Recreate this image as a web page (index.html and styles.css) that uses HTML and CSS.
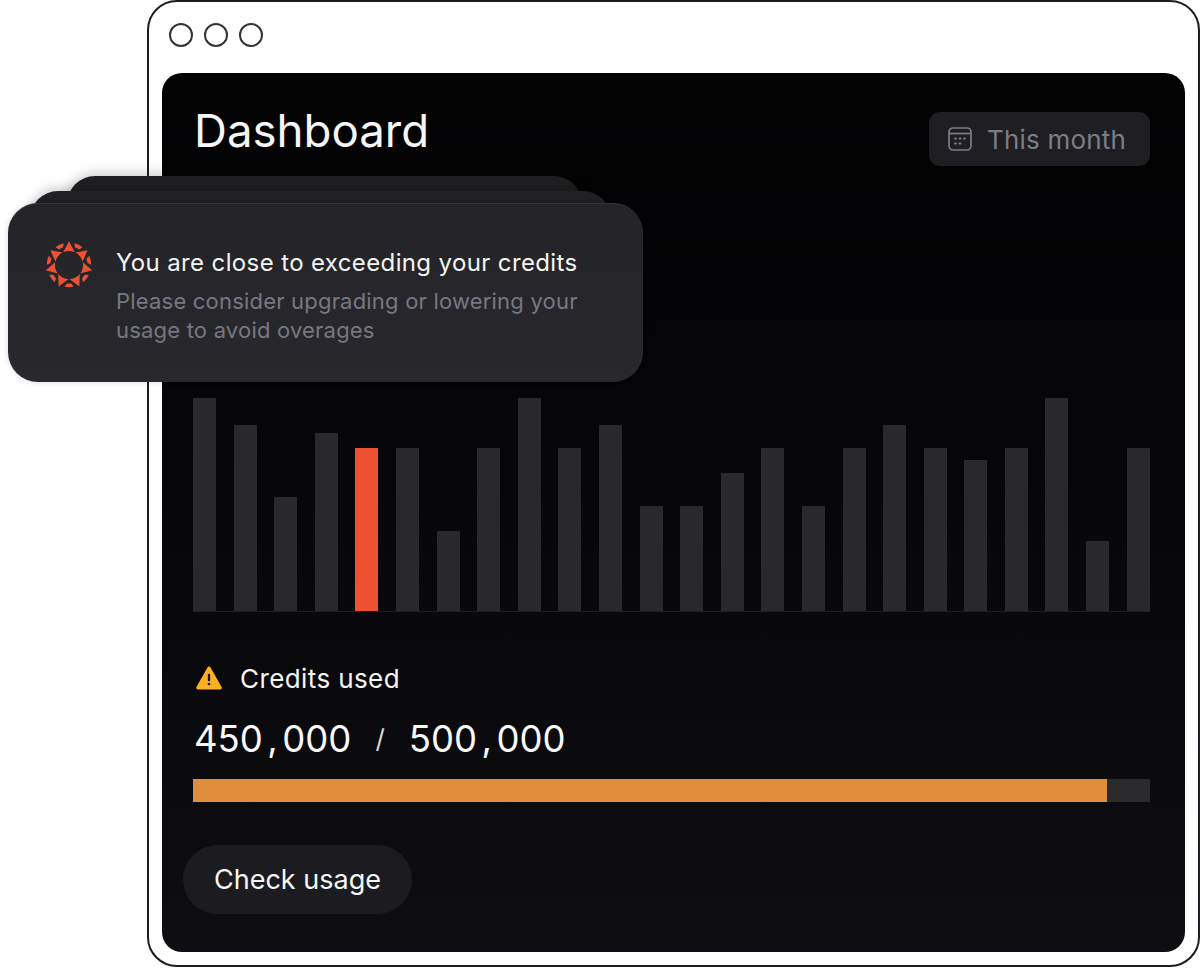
FILE: index.html
```html
<!DOCTYPE html>
<html lang="en">
<head>
<meta charset="utf-8">
<title>Dashboard</title>
<link rel="stylesheet" href="styles.css">
</head>
<body>
<div class="stage">
  <div class="window">
    <div class="dots"><span class="dot"></span><span class="dot"></span><span class="dot"></span></div>
    <main class="panel">
      <header class="head">
        <h1 class="title">Dashboard</h1>
        <div class="range">
          <svg class="cal" viewBox="0 0 24 24" fill="none" stroke="currentColor" stroke-width="1.7">
            <rect x="1" y="1" width="22" height="22" rx="4"/>
            <path d="M1 6.5h22"/>
            <path d="M7 11.5h1M11.5 11.5h1M16 11.5h1M7 16.5h1M11.5 16.5h1" stroke-linecap="round" stroke-width="1.8"/>
          </svg>
          <span>This month</span>
        </div>
      </header>
      <div class="chart">
        <div class="bar" style="height:213px"></div>
        <div class="bar" style="height:186px"></div>
        <div class="bar" style="height:114px"></div>
        <div class="bar" style="height:178px"></div>
        <div class="bar hot" style="height:163px"></div>
        <div class="bar" style="height:163px"></div>
        <div class="bar" style="height:80px"></div>
        <div class="bar" style="height:163px"></div>
        <div class="bar" style="height:213px"></div>
        <div class="bar" style="height:163px"></div>
        <div class="bar" style="height:186px"></div>
        <div class="bar" style="height:105px"></div>
        <div class="bar" style="height:105px"></div>
        <div class="bar" style="height:138px"></div>
        <div class="bar" style="height:163px"></div>
        <div class="bar" style="height:105px"></div>
        <div class="bar" style="height:163px"></div>
        <div class="bar" style="height:186px"></div>
        <div class="bar" style="height:163px"></div>
        <div class="bar" style="height:151px"></div>
        <div class="bar" style="height:163px"></div>
        <div class="bar" style="height:213px"></div>
        <div class="bar" style="height:70px"></div>
        <div class="bar" style="height:163px"></div>
      </div>
      <div class="credits">
        <svg class="warn" viewBox="0 0 26 24">
          <path d="M13 2.4 24 21.8H2Z" fill="#fbb01f" stroke="#fbb01f" stroke-width="3.6" stroke-linejoin="round"/>
          <path d="M13 9v5.2" stroke="#14141a" stroke-width="2.3" stroke-linecap="round"/>
          <circle cx="13" cy="18" r="1.35" fill="#14141a"/>
        </svg>
        <span>Credits used</span>
      </div>
      <div class="amount">
        <span>450<span class="comma">,</span>000</span>
        <span class="slash">/</span>
        <span>500<span class="comma">,</span>000</span>
      </div>
      <div class="track"><div class="fill" style="width:95.5%"></div></div>
      <button class="cta">Check usage</button>
    </main>
  </div>

  <div class="stack">
    <div class="ghost ghost-far"></div>
    <div class="ghost ghost-near"></div>
    <div class="toast">
      <svg class="sun" viewBox="-24 -24 48 48" fill="#ec5132">
        <defs>
          <path id="ray" d="M0,-23.8 L5.8,-12.8 A14,14 0 0 0 -5.8,-12.8 Z"/>
          <path id="chip" d="M-4.6,-21.8 A23.5,23.5 0 0 1 4.6,-21.8 L2.2,-18.4 A19,19 0 0 0 -2.2,-18.4 Z"/>
        </defs>
        <use href="#ray"/>
        <use href="#ray" transform="rotate(51.43)"/>
        <use href="#ray" transform="rotate(102.86)"/>
        <use href="#ray" transform="rotate(154.29)"/>
        <use href="#ray" transform="rotate(205.71)"/>
        <use href="#ray" transform="rotate(257.14)"/>
        <use href="#ray" transform="rotate(308.57)"/>
        <use href="#chip" transform="rotate(25.71)"/>
        <use href="#chip" transform="rotate(77.14)"/>
        <use href="#chip" transform="rotate(128.57)"/>
        <use href="#chip" transform="rotate(180)"/>
        <use href="#chip" transform="rotate(231.43)"/>
        <use href="#chip" transform="rotate(282.86)"/>
        <use href="#chip" transform="rotate(334.29)"/>
      </svg>
      <div class="toast-text">
        <p class="toast-title">You are close to exceeding your credits</p>
        <p class="toast-sub">Please consider upgrading or lowering your usage to avoid overages</p>
      </div>
    </div>
  </div>
</div>
</body>
</html>
```

FILE: styles.css
```css
* { box-sizing: border-box; }
html, body { margin: 0; padding: 0; background: #fff; }
body { font-family: Inter, "Liberation Sans", sans-serif; }

.stage { position: relative; width: 1200px; height: 968px; padding: 0 0 0 147px; overflow: hidden; }

.window {
  width: 1053px;
  height: 967px;
  border: 2px solid #1c1c24;
  border-radius: 30px;
  background: #fff;
  padding: 21px 13px 13px;
  display: flex;
  flex-direction: column;
}

.dots { display: flex; gap: 11px; padding-left: 7px; margin-bottom: 26px; }
.dot { width: 24px; height: 24px; border-radius: 50%; border: 2px solid #33333a; }

.panel {
  flex: 1;
  border-radius: 20px;
  background: linear-gradient(180deg, #020203 0%, #07070a 50%, #0e0e12 100%);
  padding: 39px 35px 38px 31px;
  display: flex;
  flex-direction: column;
  color: #fff;
}

.head { display: flex; justify-content: space-between; align-items: flex-start; height: 54px; }
.title { margin: -4px 0 0 1px; font-size: 45.6px; line-height: 46px; font-weight: 420; color: #f6f6f6; }
.range {
  width: 221px;
  height: 54px;
  border-radius: 11px;
  background: #1e1e23;
  color: #7d7d88;
  display: flex;
  align-items: center;
  gap: 15px;
  padding-left: 19px;
  font-size: 26px;
  letter-spacing: .2px;
}
.cal { width: 24px; height: 24px; flex: none; }

.chart {
  margin-top: 232px;
  height: 214px;
  display: flex;
  justify-content: space-between;
  align-items: flex-end;
  border-bottom: 1px solid #1f1f22;
}
.bar { width: 23px; background: #29292b; }
.bar.hot { background: #ec5132; }

.credits { margin-top: 51px; height: 30px; display: flex; align-items: center; gap: 18px; padding-left: 3px; font-size: 26px; letter-spacing: .4px; color: #f6f6f6; }
.warn { width: 26px; height: 24px; flex: none; }

.amount { margin-top: 23px; height: 46px; padding-left: 1px; display: flex; align-items: center; gap: 24px; font-size: 36.5px; color: #f8f8f8; line-height: 46px; }
.comma { margin: 0 4.5px; }
.slash { font-size: 26px; color: #d8d8d8; }

.track { margin-top: 17px; height: 23px; background: #2a2a2c; }
.fill { height: 100%; background: #e08e3c; }

.cta {
  margin: 43px 0 0 -10px;
  width: 229px;
  height: 69px;
  border: 0;
  border-radius: 35px;
  background: #1c1c20;
  color: #f6f6f6;
  font-family: inherit;
  font-size: 27px;
}

.stack { position: absolute; left: 8px; top: 176px; width: 635px; height: 206px; }
.ghost { position: absolute; border-radius: 28px; height: 120px; box-shadow: 0 -3px 12px rgba(0,0,0,.2); }
.ghost-far { left: 59px; width: 515px; top: 0; background: #1f1f22; }
.ghost-near { left: 22px; width: 581px; top: 15px; background: #212124; }
.toast {
  position: absolute;
  left: 0;
  top: 27px;
  width: 635px;
  height: 179px;
  border-radius: 30px;
  background: linear-gradient(180deg, #242428 0%, #29292d 100%);
  border-top: 1px solid #33333b;
  box-shadow: 0 0 6px rgba(0,0,0,.15);
  padding: 37px 40px 0 37px;
  display: flex;
  gap: 23px;
}
.sun { width: 48px; height: 48px; flex: none; }
.toast-text { margin-top: 7px; min-width: 0; }
.toast-title { margin: 0 0 10px; font-size: 24px; line-height: 29px; font-weight: 420; letter-spacing: .37px; color: #f4f4f4; white-space: nowrap; }
.toast-sub { margin: 0; font-size: 22px; line-height: 29px; letter-spacing: .2px; color: #777782; }
```
